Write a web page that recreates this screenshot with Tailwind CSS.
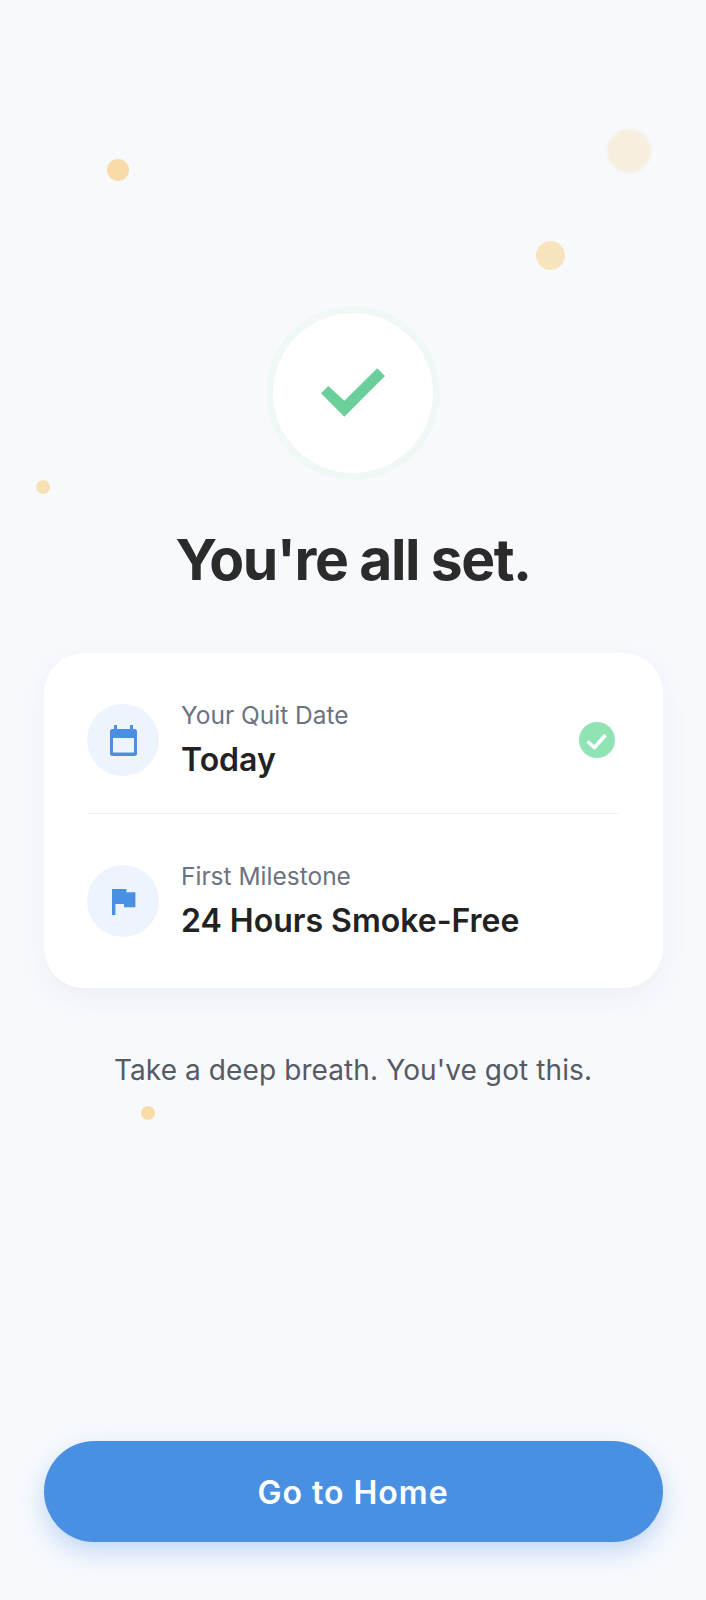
<!DOCTYPE html>
<html lang="en">
<head>
    <meta charset="UTF-8">
    <meta name="viewport" content="width=device-width, initial-scale=1.0">
    <title>You're all set</title>
    <script src="https://cdn.jsdelivr.net/npm/@tailwindcss/browser@4"></script>
</head>
<body class="bg-[#f7f9fd] font-['Inter',sans-serif]">

    <div class="relative h-[1600px] w-[706px] overflow-hidden flex flex-col items-center px-[43.500px] pt-[313px] pb-[58.300px]">

        <!-- Confetti dots -->
        <div class="absolute left-[107px] top-[159px] size-[22px] rounded-full bg-[#f8dba6]"></div>
        <div class="absolute left-[607px] top-[129px] size-[44px] rounded-full bg-[#f6efdf] blur-[1px]"></div>
        <div class="absolute left-[536px] top-[241px] size-[29px] rounded-full bg-[#f7e4bf]"></div>
        <div class="absolute left-[36px] top-[480px] size-[14px] rounded-full bg-[#f8e0b6]"></div>
        <div class="absolute left-[141px] top-[1106px] size-[14px] rounded-full bg-[#f8dba6]"></div>

        <!-- Success badge -->
        <div class="size-[160px] shrink-0 rounded-full bg-white shadow-[0_0_0_7px_#eff8f5] flex items-center justify-center">
            <svg class="w-[64px] h-[50px]" viewBox="0 0 64 50">
                <polygon points="0,25.300 7.300,18 23.300,32.700 56.300,0.300 64,8 23.300,48.700" fill="#6bcf9c"/>
            </svg>
        </div>

        <h1 class="mt-[53px] text-[57px] leading-[68px] font-bold tracking-[-1.5px] text-[#2b2b2b]">You're all set.</h1>

        <!-- Summary card -->
        <div class="mt-[59px] w-full h-[335px] shrink-0 rounded-[40px] bg-white shadow-[0_10px_30px_rgba(40,60,110,0.05)] px-[43.500px] pt-[51px]">
            <div class="flex items-center h-[72px]">
                <div class="size-[72px] shrink-0 rounded-full bg-[#edf4fd] flex items-center justify-center">
                    <svg class="w-[27px] h-[31px]" viewBox="0 0 27 31">
                        <path d="M4 0h3v4h13V0h3v4h1.500A2.500 2.500 0 0 1 27 6.500V28.500A2.500 2.500 0 0 1 24.500 31H2.500A2.500 2.500 0 0 1 0 28.500V6.500A2.500 2.500 0 0 1 2.500 4H4z M3 13v14.500h21V13z" fill="#4a90e2" fill-rule="evenodd"/>
                    </svg>
                </div>
                <div class="ml-[22px] flex-1">
                    <p class="-mt-[2px] text-[24.500px] leading-[30px] text-[#6b7280]">Your Quit Date</p>
                    <p class="mt-[11px] text-[32px] leading-[38px] font-semibold text-[#222222]">Today</p>
                </div>
                <div class="mr-[4px] size-[36px] rounded-full bg-[#90e3b3] flex items-center justify-center">
                    <svg class="size-[22px]" viewBox="0 0 22 22" fill="none">
                        <path d="M1.500 12.500 L8.500 18.500 L19.500 6" stroke="#ffffff" stroke-width="3.600"/>
                    </svg>
                </div>
            </div>

            <div class="mt-[37px] h-[1px] bg-[#f0f2f5]"></div>

            <div class="mt-[51px] flex items-center h-[72px]">
                <div class="size-[72px] shrink-0 rounded-full bg-[#edf4fd] flex items-center justify-center">
                    <svg class="w-[23.400px] h-[26px] ml-[2px] mt-[2px]" viewBox="0 0 23.400 26" fill="#4a90e2">
                        <path d="M0 0H14.400V3.300H23.400V18.300H12V15H3.400V26H0z"/>
                    </svg>
                </div>
                <div class="ml-[22px] flex-1">
                    <p class="-mt-[2px] text-[24.500px] leading-[30px] text-[#6b7280]">First Milestone</p>
                    <p class="mt-[11px] text-[32px] leading-[38px] font-semibold text-[#222222]">24 Hours Smoke-Free</p>
                </div>
            </div>
        </div>

        <p class="mt-[63px] text-[28px] leading-[38px] tracking-[0.1px] text-[#555a63]">Take a deep breath. You've got this.</p>

        <!-- Primary action -->
        <button class="mt-auto h-[101px] w-full shrink-0 rounded-full bg-[#4a90e2] pt-[3px] text-white text-[32px] font-semibold tracking-[1px] shadow-[0_10px_24px_rgba(74,144,226,0.3)]">Go to Home</button>
    </div>

</body>
</html>
